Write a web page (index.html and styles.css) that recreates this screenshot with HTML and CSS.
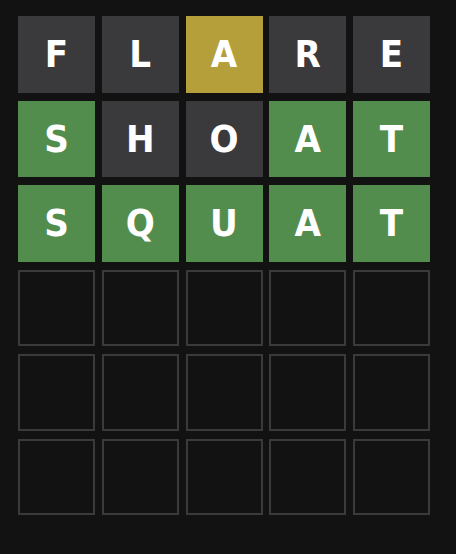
FILE: index.html
```html
<!DOCTYPE html>
<html lang="en">
<head>
<meta charset="utf-8">
<title>Wordle</title>
<link rel="stylesheet" href="styles.css">
</head>
<body>
<main class="board">
  <div class="tile absent">F</div>
  <div class="tile absent">L</div>
  <div class="tile present">A</div>
  <div class="tile absent">R</div>
  <div class="tile absent">E</div>

  <div class="tile correct">S</div>
  <div class="tile absent">H</div>
  <div class="tile absent">O</div>
  <div class="tile correct">A</div>
  <div class="tile correct">T</div>

  <div class="tile correct">S</div>
  <div class="tile correct">Q</div>
  <div class="tile correct">U</div>
  <div class="tile correct">A</div>
  <div class="tile correct">T</div>

  <div class="tile empty"></div>
  <div class="tile empty"></div>
  <div class="tile empty"></div>
  <div class="tile empty"></div>
  <div class="tile empty"></div>

  <div class="tile empty"></div>
  <div class="tile empty"></div>
  <div class="tile empty"></div>
  <div class="tile empty"></div>
  <div class="tile empty"></div>

  <div class="tile empty"></div>
  <div class="tile empty"></div>
  <div class="tile empty"></div>
  <div class="tile empty"></div>
  <div class="tile empty"></div>
</main>
</body>
</html>
```

FILE: styles.css
```css
html, body {
  margin: 0;
  padding: 0;
  background: #121213;
}

body {
  width: 456px;
  height: 554px;
  padding: 16px 0 0 18px;
  box-sizing: border-box;
  font-family: "DejaVu Sans", "Liberation Sans", sans-serif;
}

.board {
  width: 412px;
  height: 499px;
  display: grid;
  grid-template-columns: repeat(5, 1fr);
  grid-template-rows: repeat(6, 1fr);
  gap: 8px 6.75px;
}

.tile {
  display: flex;
  align-items: center;
  justify-content: center;
  box-sizing: border-box;
  color: #ffffff;
  font-size: 38px;
  font-weight: bold;
  font-stretch: condensed;
  line-height: 1;
}

.absent {
  background: #3a3a3c;
}

.present {
  background: #b59f3b;
}

.correct {
  background: #538d4e;
}

.empty {
  border: 2px solid #3a3a3c;
}
```
